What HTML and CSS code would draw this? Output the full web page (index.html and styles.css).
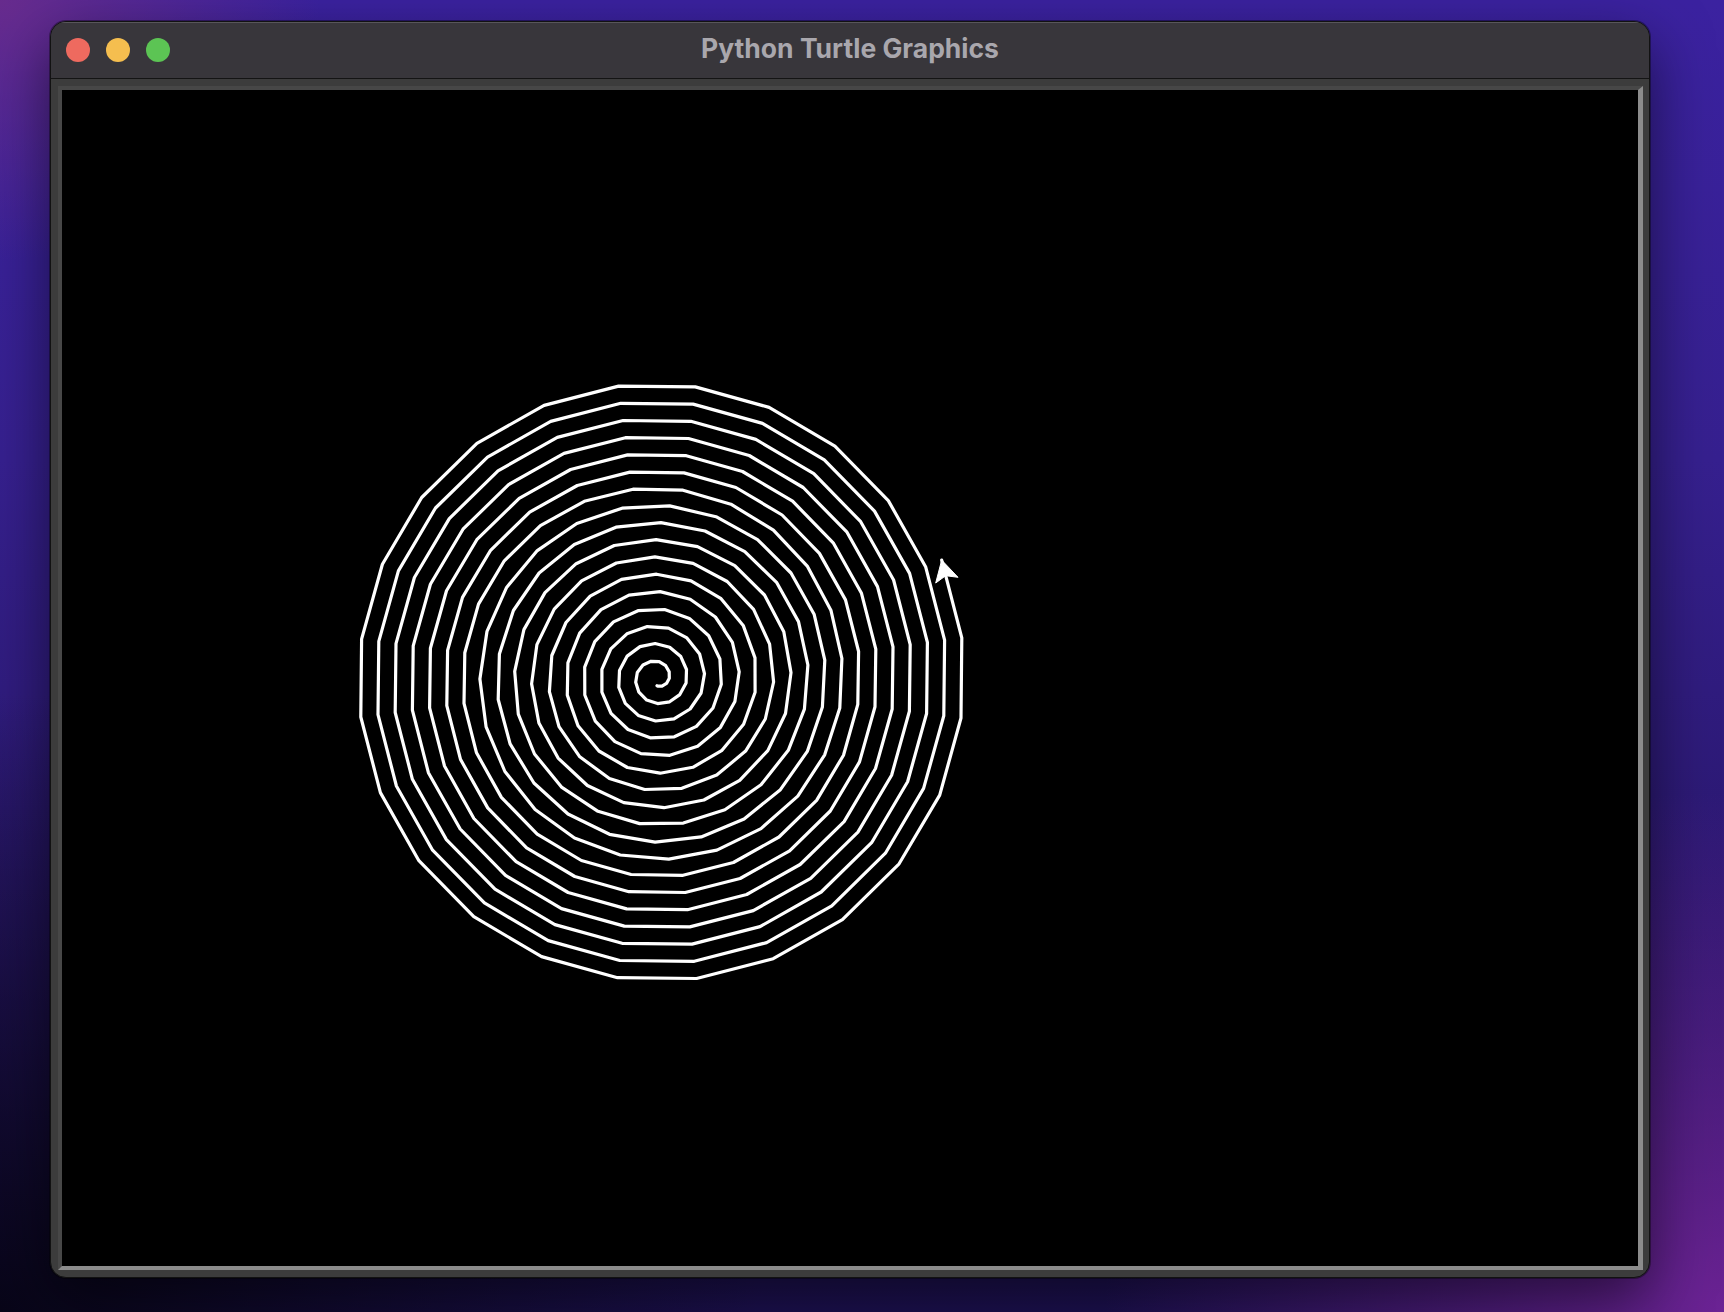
FILE: index.html
```html
<!DOCTYPE html>
<html lang="en">
<head>
<meta charset="utf-8">
<title>Python Turtle Graphics</title>
<link rel="stylesheet" href="styles.css">
</head>
<body>
<div class="desktop">
  <div class="window">
    <div class="titlebar">
      <div class="lights">
        <span class="light red"></span>
        <span class="light yellow"></span>
        <span class="light green"></span>
      </div>
      <div class="title">Python Turtle Graphics</div>
      <div class="spacer"></div>
    </div>
    <div class="body">
      <div class="frame">
        <svg class="canvas" width="1576" height="1176" viewBox="62 90 1576 1176" xmlns="http://www.w3.org/2000/svg">
          <polyline id="spiral" class="pen" points=""></polyline>
          <polygon id="turtle" class="turtle" points=""></polygon>
        </svg>
      </div>
    </div>
  </div>
</div>
<script src="script.js"></script>
</body>
</html>
```

FILE: styles.css
```css
html, body {
  margin: 0;
  padding: 0;
}

body {
  width: 1724px;
  height: 1312px;
  overflow: hidden;
  font-family: Inter, "Noto Sans", "Liberation Sans", sans-serif;
  background:
    radial-gradient(ellipse 620px 520px at 100% 100%, rgba(112, 36, 152, 0.95), rgba(112, 36, 152, 0) 100%),
    radial-gradient(ellipse 760px 620px at 0% 100%, rgba(8, 5, 24, 1), rgba(8, 5, 24, 0) 100%),
    radial-gradient(ellipse 320px 260px at 0% 0%, rgba(104, 44, 142, 1), rgba(104, 44, 142, 0) 100%),
    linear-gradient(180deg, #3b22a0 0%, #36208f 35%, #2a186e 70%, #1d1152 100%);
}

.desktop {
  padding: 21px 0 0 50px;
}

.window {
  width: 1600px;
  height: 1257px;
  box-sizing: border-box;
  border: 1px solid #121212;
  border-radius: 16px;
  overflow: hidden;
  display: flex;
  flex-direction: column;
  background: #3c3c3c;
  box-shadow: 0 0 0 1px rgba(0, 0, 0, 0.35), 0 22px 60px rgba(0, 0, 0, 0.55);
}

.titlebar {
  height: 56px;
  flex: none;
  background: #38363b;
  border-bottom: 1px solid #141414;
  display: grid;
  grid-template-columns: 1fr auto 1fr;
  align-items: center;
  box-shadow: inset 0 1px 0 rgba(255, 255, 255, 0.16);
}

.lights {
  display: flex;
  gap: 16px;
  padding-left: 15px;
}

.light {
  width: 24px;
  height: 24px;
  border-radius: 50%;
  display: block;
}

.red { background: #ee6a5f; }
.yellow { background: #f5be4f; }
.green { background: #5cc454; }

.title {
  color: #a9a7ad;
  font-size: 26.5px;
  font-weight: 700;
  line-height: 1;
  padding-bottom: 3px;
  white-space: nowrap;
}

.body {
  flex: 1;
  display: flex;
  padding: 7px 6px 7px 7px;
}

.frame {
  display: flex;
  border-style: solid;
  border-width: 4px 5px 4px 4px;
  border-color: #474747 #8c8c8c #8c8c8c #474747;
}

.canvas {
  display: block;
  width: 1576px;
  height: 1176px;
  background: #000;
}

.pen {
  fill: none;
  stroke: #ffffff;
  stroke-width: 3.2;
  stroke-linejoin: round;
  stroke-linecap: round;
}

.turtle {
  fill: #ffffff;
  stroke: #ffffff;
  stroke-width: 1;
  stroke-linejoin: round;
}
```

FILE: script.js
```js
(function () {
  var cx = 657, cy = 678, r0 = 7.7, dr = 17.2;
  var phiEnd = 17 * 360 + 112.5;

  function nSides(r) {
    return Math.min(24, 12 + r / 16);
  }

  function pointAt(phi, rv) {
    var a = (270 + phi) * Math.PI / 180;
    return [cx + rv * Math.cos(a), cy - rv * Math.sin(a)];
  }

  var pts = [];
  var phi = phiEnd;
  while (phi > 0) {
    var ra = r0 + dr * phi / 360;
    var n = nSides(ra);
    var rv = ra / Math.cos(Math.PI / n);
    pts.push(pointAt(phi, rv));
    phi -= 360 / n;
  }
  pts.push(pointAt(0, r0));
  pts.reverse();

  document.getElementById('spiral').setAttribute('points',
    pts.map(function (p) { return p[0].toFixed(1) + ',' + p[1].toFixed(1); }).join(' '));

  var tip = pts[pts.length - 1];
  var prev = pts[pts.length - 2];
  var dx = tip[0] - prev[0], dy = tip[1] - prev[1];
  var len = Math.sqrt(dx * dx + dy * dy);
  dx /= len; dy /= len;
  var px = -dy, py = dx;
  var s = 2.3;
  var back = [tip[0] - 9 * s * dx, tip[1] - 9 * s * dy];
  var w1 = [back[0] + 5 * s * px, back[1] + 5 * s * py];
  var w2 = [back[0] - 5 * s * px, back[1] - 5 * s * py];
  var notch = [tip[0] - 7 * s * dx, tip[1] - 7 * s * dy];
  document.getElementById('turtle').setAttribute('points',
    [tip, w1, notch, w2].map(function (p) { return p[0].toFixed(1) + ',' + p[1].toFixed(1); }).join(' '));
})();
```
